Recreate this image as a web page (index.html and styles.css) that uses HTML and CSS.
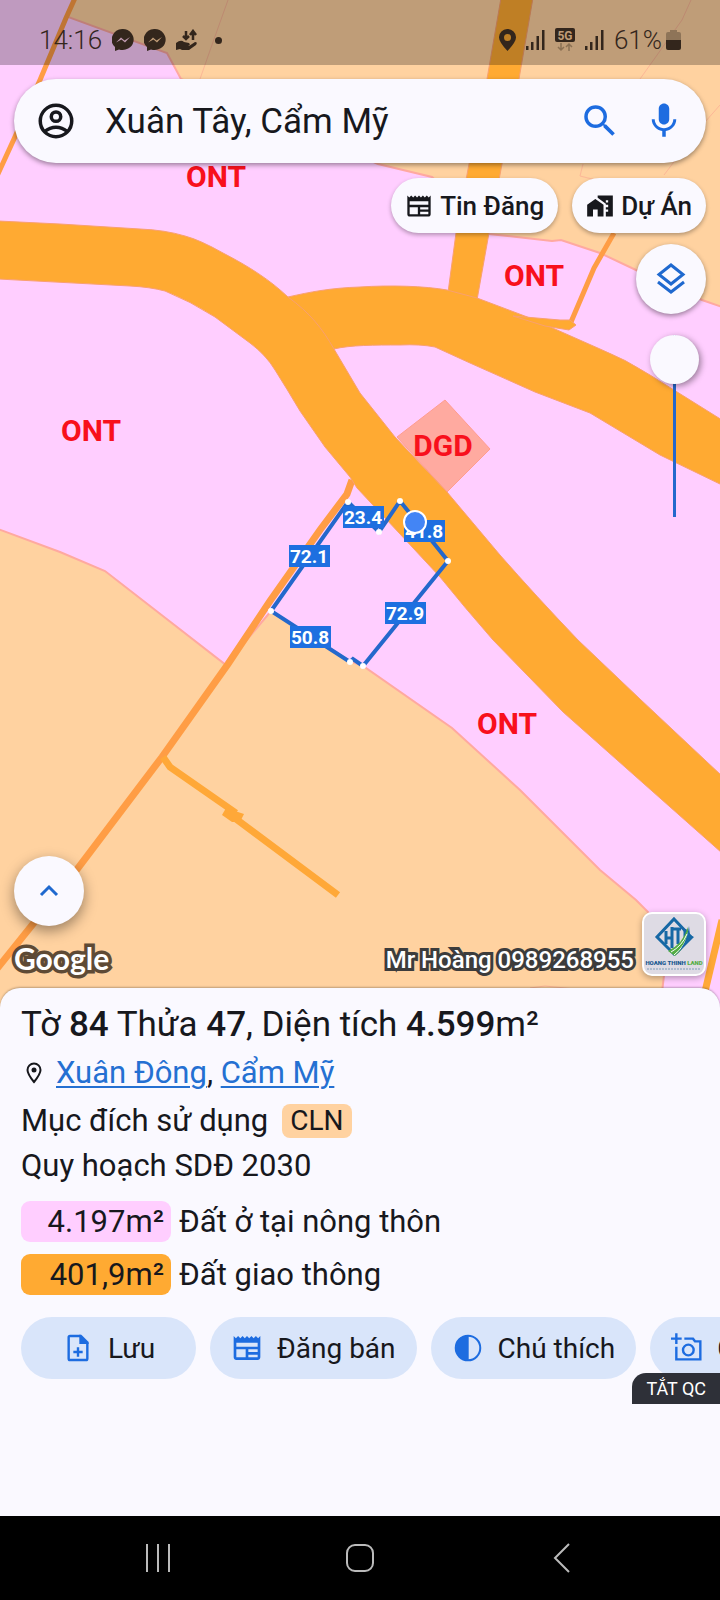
FILE: index.html
```html
<!DOCTYPE html>
<html lang="vi">
<head>
  <meta charset="UTF-8">
  <meta name="viewport" content="width=device-width, initial-scale=1.0">
  <title>Xuân Tây, Cẩm Mỹ</title>
  <link rel="stylesheet" href="styles.css">
</head>
<body>
  <main class="map">
    <svg class="map-canvas" viewBox="0 0 720 1008" preserveAspectRatio="xMidYMin slice">
      <rect class="ont" width="720" height="1008"/>

      <!-- Farm land -->
      <path class="farm" d="M74 -2L68 17L167 53L181 79L378 164L432 177L489 234L552 241L561 240L600 253L636 270L702 300L722 307V-2z"/>
      <path class="farm" d="M-2 529L60 552L105 571L226 665L271 611L350 661L363 666L452 728L520 790L600 870L636 900L648 912L664 975L660 1010H-2z"/>
      <path class="border" d="M228 0L213 42L200 79M691 0L682 20L640 79M720 105L698 130L664 175M583 164L580 176L600 181M530 988L545 986L575 989"/>

      <!-- Roads -->
      <path class="road" d="M501 -2H533L519 79L502 164L489 233L477 300H447L456 233L469 164L487 79z"/>
      <path class="road" d="M288 297C310 292 330 288 360 287C390 285 425 286 447 290L477 298L530 318L600 349Q625 359 650 375L722 420V485L660 455L590 413L535 392L470 363L435 347Q420 344 400 345C375 345 350 345 334 349z"/>
      <path class="lane" d="M75 -2L66 18L40 80L14 139L-3 176"/>
      <path class="lane" d="M614 233L594 268L571 322"/>
      <path class="road" d="M513 316L560 320L570 320L576 325L569 330L545 326z"/>
      <path class="lane-wide" d="M352 480L347 494L320 530L270 601L228 664L162 757L78 868L-4 970L-4 990"/>
      <path class="side-road" d="M163 757L170 767L236 813M232 816L338 895"/>
      <path class="side-road-joint" d="M226 808L244 814L240 822L232 822L222 815z"/>
      <path class="side-road" d="M722 920L703 1000"/>
      <path class="school" d="M445 400L490 449L447 492L397 437z"/>
      <path class="road" d="M-2 221L60 224L140 229Q165 230 185 236Q200 240 223 253C250 267 270 280 288 297C310 313 322 328 334 349L360 393L395 437L447 492L500 555Q535 595 578 640L640 699L722 776V853L643 783L563 712L493 640Q465 608 440 577L400 534L357 488L350 477L325 447L300 411Q287 389 275 370Q266 355 250 343L215 317Q190 301 165 291Q150 287 130 286L-2 279z"/>

      <!-- Land use codes -->
      <text class="code" x="216" y="187">ONT</text>
      <text class="code" x="534" y="286">ONT</text>
      <text class="code" x="91" y="441">ONT</text>
      <text class="code" x="443" y="456">DGD</text>
      <text class="code" x="507" y="734">ONT</text>

      <!-- Selected parcel -->
      <path class="parcel" d="M348 502L379 532L400 501L448 561L363 666L353 659L350 662L271 611z"/>
      <g class="vertex">
        <circle cx="348" cy="502" r="3"/>
        <circle cx="379" cy="532" r="3"/>
        <circle cx="400" cy="501" r="3"/>
        <circle cx="448" cy="561" r="3"/>
        <circle cx="363" cy="666" r="3"/>
        <circle cx="350" cy="662" r="3"/>
        <circle cx="271" cy="611" r="3"/>
      </g>
      <g class="edge">
        <rect x="343" y="506" width="41" height="22"/><text x="363" y="524">23.4</text>
        <rect x="404" y="520" width="41" height="22"/><text x="424" y="538">41.8</text>
        <rect x="289" y="545" width="41" height="22"/><text x="309" y="563">72.1</text>
        <rect x="385" y="602" width="41" height="22"/><text x="405" y="620">72.9</text>
        <rect x="290" y="626" width="41" height="22"/><text x="310" y="644">50.8</text>
      </g>
      <circle class="here" cx="415" cy="522" r="11"/>
    </svg>

    <header class="status">
      <span class="status-text">14:16</span>
      <svg width="22" height="22" viewBox="0 0 22 22"><path d="M11 0a11 10.5 0 1 1-4 20.400L3 22V18A11 10.500 0 0 1 11 0z"/><path d="M4 13.500L9 8.500L12.500 11.500L18 8L13 13.500L9.500 10.500z" fill="#c09bb0"/></svg>
      <svg width="22" height="22" viewBox="0 0 22 22"><path d="M11 0a11 10.5 0 1 1-4 20.400L3 22V18A11 10.500 0 0 1 11 0z"/><path d="M4 13.500L9 8.500L12.500 11.500L18 8L13 13.500L9.500 10.500z" fill="#c09c77"/></svg>
      <svg width="22" height="22" viewBox="0 0 22 22"><path d="M0 14Q5 10 8 13L13 14Q15 16 12 17H8H13L19 13Q22 13 20 16L13 21H6L4 20L0 21z"/><path d="M10 2V10M7 7L10 10L13 7M17 11V3M14 6L17 2L20 6" fill="none" stroke="currentColor" stroke-width="2.500"/></svg>
      <span class="status-dot"></span>
      <span class="status-space"></span>
      <svg width="17" height="22" viewBox="0 0 17 22"><path fill-rule="evenodd" d="M8.500 0A8.300 8.300 0 0 1 17 8.500Q17 13 8.500 22Q0 13 0 8.500A8.300 8.300 0 0 1 8.500 0zM8.500 5a3.500 3.500 0 1 0 0 7a3.500 3.500 0 0 0 0-7z"/></svg>
      <svg width="19" height="20" viewBox="0 0 19 20"><path d="M0 16h2.500v4H0zM5 12h2.500v8H5zM10.500 6h2.500v14h-2.500zM16 0h2.500v20H16z"/></svg>
      <svg class="net" width="20" height="24" viewBox="0 0 20 24"><rect width="20" height="14" rx="2"/><text x="10" y="12">5G</text><path d="M6 15v7M3 19l3 3l3-3M14 23v-7M11 19l3-3l3 3" fill="none" stroke="#8b7154" stroke-width="1.500"/></svg>
      <svg width="19" height="20" viewBox="0 0 19 20"><path d="M0 16h2.500v4H0zM5 12h2.500v8H5zM10.500 6h2.500v14h-2.500zM16 0h2.500v20H16z"/></svg>
      <span class="status-text">61%</span>
      <svg class="battery" width="15" height="20" viewBox="0 0 15 20"><path d="M4 0h7v2h2q2 0 2 2v6H0V4q0-2 2-2h2z" fill="#8e7458"/><path d="M0 10h15v8q0 2-2 2H2q-2 0-2-2z"/></svg>
    </header>

    <form class="search" role="search">
      <button class="icon-button" type="button" aria-label="Tài khoản">
        <svg class="icon dark" viewBox="0 0 24 24"><g fill="none" stroke="currentColor" stroke-width="2"><circle cx="12" cy="12" r="9"/><circle cx="12" cy="9.500" r="2.700"/><path d="M5.500 18Q8.500 15.500 12 15.500T18.500 18"/></g></svg>
      </button>
      <input type="text" value="Xuân Tây, Cẩm Mỹ" aria-label="Tìm kiếm">
      <button class="icon-button" type="submit" aria-label="Tìm">
        <svg class="icon" viewBox="0 0 24 24"><path d="M15.500 14h-.79l-.28-.27A6.470 6.470 0 0 0 16 9.500 6.500 6.500 0 1 0 9.500 16c1.610 0 3.090-.59 4.230-1.570l.27.28v.79l5 4.990L20.490 19l-4.990-5zm-6 0C7.010 14 5 11.990 5 9.500S7.010 5 9.500 5 14 7.010 14 9.500 11.990 14 9.500 14z"/></svg>
      </button>
      <button class="icon-button" type="button" aria-label="Giọng nói">
        <svg class="icon" viewBox="0 0 24 24"><path d="M12 14c1.660 0 2.990-1.340 2.990-3L15 5c0-1.660-1.340-3-3-3S9 3.340 9 5v6c0 1.660 1.340 3 3 3zm5.300-3c0 3-2.540 5.100-5.300 5.100S6.700 14 6.700 11H5c0 3.410 2.720 6.230 6 6.720V21h2v-3.280c3.280-.48 6-3.300 6-6.720h-1.700z"/></svg>
      </button>
    </form>

    <div class="chips">
      <button class="chip" type="button">
        <svg viewBox="0 0 24 24"><path d="M22 3l-1.670 1.670L18.670 3 17 4.670 15.330 3l-1.660 1.670L12 3l-1.670 1.670L8.670 3 7 4.670 5.330 3 3.670 4.670 2 3v16c0 1.100.9 2 2 2h16c1.100 0 2-.9 2-2V3zM11 19H4v-6h7v6zm9 0h-7v-2h7v2zm0-4h-7v-2h7v2zm0-4H4V8h16v3z"/></svg>
        Tin Đăng
      </button>
      <button class="chip" type="button">
        <svg viewBox="0 0 24 24"><path d="M1 11v10h5v-6h4v6h5V11L8 6z"/><path d="M10 3v1.970l7 5V11h2v2h-2v2h2v2h-2v4h6V3H10zm9 6h-2V7h2v2z"/></svg>
        Dự Án
      </button>
    </div>

    <div class="side">
      <button class="round" type="button" aria-label="Lớp bản đồ">
        <svg width="30" height="32" viewBox="0 0 30 32"><path d="M15 2L27 11.500L15 21L3 11.500zM2 19L15 29L28 19" fill="none" stroke="currentColor" stroke-width="3"/></svg>
      </button>
      <input class="opacity" type="range" min="0" max="100" value="0" aria-label="Độ mờ">
    </div>

    <div class="map-bottom">
      <div class="map-left">
        <button class="round raised" type="button" aria-label="Mở rộng">
          <svg width="20" height="14" viewBox="0 0 20 14"><path d="M2 11L10 3L18 11" fill="none" stroke="currentColor" stroke-width="3"/></svg>
        </button>
        <span class="google">Google</span>
      </div>
      <div class="agent">
        <span class="agent-name">Mr Hoàng 0989268955</span>
        <svg class="agent-logo" viewBox="0 0 60 60">
          <path d="M30 5L47 23L30 40L13 23z" fill="none" stroke="#1768a5" stroke-width="3"/>
          <path d="M22 17V30M28 13V34M22 24H28M28 15H37M34 15V30M41 15V27" fill="none" stroke="#1768a5" stroke-width="3"/>
          <path d="M24 37Q39 30 44 13Q45 31 31 42z" fill="#54ad43"/>
          <path d="M27 38Q38 32 43 20M30 41Q42 32 45 16" fill="none" stroke="#fff" stroke-width="1"/>
          <path d="M45 12L46 21L50 23L31 42Q43 30 45 12z" fill="#1768a5"/>
          <text x="30" y="51" fill="#17578f">HOANG THINH <tspan fill="#54ad43">LAND</tspan></text>
          <path d="M3 55H57" stroke="#7f9db8" stroke-width="1" stroke-dasharray="2 1"/>
        </svg>
      </div>
    </div>
  </main>

  <section class="sheet">
    <h1>Tờ <b>84</b> Thửa <b>47</b>, Diện tích <b>4.599</b>m²</h1>
    <p class="place">
      <svg width="16" height="22" viewBox="0 0 16 22"><path d="M8 1.500A6.500 6.500 0 0 1 14.500 8Q14.500 12 8 20Q1.500 12 1.500 8A6.500 6.500 0 0 1 8 1.500z" fill="none" stroke="currentColor" stroke-width="2"/><circle cx="8" cy="8" r="2.500"/></svg>
      <span><a href="#">Xuân Đông</a>, <a href="#">Cẩm Mỹ</a></span>
    </p>
    <p class="purpose">Mục đích sử dụng <span class="tag">CLN</span></p>
    <p class="plan">Quy hoạch SDĐ 2030</p>

    <ul class="legend">
      <li><span class="area rural">4.197m²</span>Đất ở tại nông thôn</li>
      <li><span class="area traffic">401,9m²</span>Đất giao thông</li>
    </ul>

    <div class="actions">
      <button type="button">
        <svg viewBox="0 0 24 24"><path d="M14 3H6Q5 3 5 4V20Q5 21 6 21H18Q19 21 19 20V8M12 11.500V18.500M8.500 15H15.500" fill="none" stroke="currentColor" stroke-width="1.800"/><path d="M13 2H14.500L20 7.500V9H13z"/></svg>
        Lưu
      </button>
      <button type="button">
        <svg viewBox="0 0 24 24"><path d="M22 3l-1.670 1.670L18.670 3 17 4.670 15.330 3l-1.660 1.670L12 3l-1.670 1.670L8.670 3 7 4.670 5.330 3 3.670 4.670 2 3v16c0 1.100.9 2 2 2h16c1.100 0 2-.9 2-2V3zM11 19H4v-6h7v6zm9 0h-7v-2h7v2zm0-4h-7v-2h7v2zm0-4H4V8h16v3z"/></svg>
        Đăng bán
      </button>
      <button type="button">
        <svg viewBox="0 0 24 24"><circle cx="12" cy="12" r="9.200" fill="none" stroke="currentColor" stroke-width="1.500"/><path d="M12.500 2.500A9.500 9.500 0 0 0 12.500 21.500z"/></svg>
        Chú thích
      </button>
      <button type="button">
        <svg viewBox="0 0 24 24"><g fill="none" stroke="currentColor" stroke-width="1.800"><path d="M4 1V9M0 5H8M4 11V20.500H22V7H18L16.500 5H10"/><circle cx="13" cy="13.500" r="4"/></g></svg>
        Chụp ảnh
      </button>
    </div>
    <button class="hide-ads" type="button">TẮT QC</button>
  </section>

  <nav class="system-nav">
    <button type="button" aria-label="Gần đây"><svg width="30" height="30" viewBox="0 0 30 30"><path d="M4 1V29M15 1V29M26 1V29"/></svg></button>
    <button type="button" aria-label="Trang chủ"><svg width="30" height="30" viewBox="0 0 30 30"><rect x="2" y="2" width="26" height="26" rx="8"/></svg></button>
    <button type="button" aria-label="Quay lại"><svg width="30" height="30" viewBox="0 0 30 30"><path d="M22 1L8 15L22 29"/></svg></button>
  </nav>
</body>
</html>
```
FILE: styles.css
```css
* {
  box-sizing: border-box;
}
body {
  margin: 0;
  min-height: 100vh;
  display: flex;
  flex-direction: column;
  background-color: #faf9ff;
  color: #17181d;
  font-family: Roboto, sans-serif;
}
button,
input {
  font-family: inherit;
  color: inherit;
}
button {
  border: none;
  padding: 0;
  cursor: pointer;
}
svg {
  fill: currentColor;
  flex: none;
}

/* Map */
.map {
  position: relative;
  flex: 1;
  display: flex;
  flex-direction: column;
  overflow: hidden;
}
.map-canvas {
  position: absolute;
  inset: 0;
  width: 100%;
  height: 100%;
}
.ont {
  fill: #ffceff;
}
.farm {
  fill: #ffd2a0;
  stroke: #ffa9a0;
  stroke-width: 2;
}
.border {
  fill: none;
  stroke: #fcb797;
  stroke-width: 1;
}
.road {
  fill: #ffaa32;
  stroke: #f9a070;
  stroke-width: 1;
}
.lane,
.lane-wide,
.side-road {
  fill: none;
  stroke: #ff9d45;
  stroke-width: 5;
}
.lane-wide {
  stroke-width: 7;
}
.side-road {
  stroke: #ffa838;
  stroke-width: 7;
}
.side-road-joint {
  fill: #ffa838;
}
.school {
  fill: #ffaaa0;
  stroke: #ff9d90;
}
.code {
  fill: #f8101c;
  font-size: 30px;
  font-weight: 700;
  text-anchor: middle;
}
.parcel {
  fill: none;
  stroke: #2468cc;
  stroke-width: 4;
}
.vertex {
  fill: #fff;
}
.edge rect {
  fill: #1e6fe0;
}
.edge text {
  fill: #fff;
  font-size: 19px;
  font-weight: 700;
  text-anchor: middle;
}
.here {
  fill: #4385f5;
  stroke: #fff;
  stroke-width: 2;
}

/* Status bar */
.status {
  position: relative;
  display: flex;
  align-items: center;
  gap: 10px;
  height: 65px;
  padding: 15px 39px 0;
  background-color: rgba(0, 0, 0, 0.25);
  color: #33261c;
}
.status-text {
  font-size: 26px;
  font-weight: 300;
}
.status-dot {
  width: 7px;
  height: 7px;
  margin-left: 7px;
  border-radius: 50%;
  background-color: currentColor;
}
.status-space {
  flex: 1;
}
.net text {
  fill: #c09c77;
  font-size: 12px;
  font-weight: 700;
  text-anchor: middle;
}
.battery {
  margin-left: -6px;
}

/* Search */
.search {
  position: relative;
  display: flex;
  align-items: center;
  gap: 22px;
  height: 84px;
  margin: 14px 14px 0;
  padding: 0 21px;
  border-radius: 42px;
  background-color: #faf9ff;
  box-shadow: 0 2px 5px rgba(0, 0, 0, 0.4);
}
.search input {
  flex: 1;
  min-width: 0;
  height: 60px;
  padding: 0 0 0 6px;
  border: none;
  outline: none;
  background: none;
  font-size: 35px;
}
.icon-button {
  display: flex;
  background: none;
}
.icon {
  width: 42px;
  height: 42px;
  color: #1d6ce0;
}
.icon.dark {
  color: #17181d;
}
.chips {
  position: relative;
  display: flex;
  justify-content: flex-end;
  gap: 14px;
  margin: 15px 14px 0;
}
.chip {
  display: flex;
  align-items: center;
  gap: 7px;
  height: 55px;
  padding: 0 14px;
  border-radius: 28px;
  background-color: #faf9ff;
  box-shadow: 0 2px 4px rgba(0, 0, 0, 0.3);
  font-size: 26px;
  font-weight: 500;
}
.chip svg {
  width: 28px;
  height: 28px;
}
.side {
  position: relative;
  display: flex;
  flex-direction: column;
  align-items: flex-end;
  gap: 21px;
  margin: 11px 14px 0;
}
.round {
  display: flex;
  align-items: center;
  justify-content: center;
  width: 70px;
  height: 70px;
  border-radius: 50%;
  background-color: #faf9ff;
  color: #1f69cf;
  box-shadow: 0 2px 5px rgba(0, 0, 0, 0.4);
}
.raised {
  box-shadow: 0 5px 14px rgba(0, 0, 0, 0.4);
}
.opacity {
  appearance: none;
  writing-mode: vertical-lr;
  width: 49px;
  height: 182px;
  margin: 0 7px 0 0;
  background: linear-gradient(#2468cc, #2468cc) center / 3px 100% no-repeat;
}
.opacity::-webkit-slider-thumb {
  appearance: none;
  width: 49px;
  height: 49px;
  border-radius: 50%;
  background-color: #faf9ff;
  box-shadow: 2px 2px 6px rgba(0, 0, 0, 0.4);
}
.map-bottom {
  position: relative;
  display: flex;
  justify-content: space-between;
  align-items: flex-end;
  margin-top: auto;
  padding: 0 14px 32px;
}
.map-left {
  display: flex;
  flex-direction: column;
  gap: 14px;
}
.google,
.agent-name {
  color: #fff;
  paint-order: stroke fill;
}
.google {
  font: bold 30px/36px Lato, sans-serif;
  -webkit-text-stroke: 7px #5e4a35;
}
.agent {
  display: flex;
  align-items: center;
  gap: 8px;
}
.agent-name {
  margin-top: 32px;
  font-size: 24px;
  line-height: 32px;
  font-weight: 500;
  -webkit-text-stroke: 6px #3c3c3c;
}
.agent-logo {
  width: 64px;
  height: 64px;
  border: 2px solid #fff;
  border-radius: 10px;
  background-color: #dedbe4;
  box-shadow: 0 2px 6px rgba(0, 0, 0, 0.3);
}
.agent-logo text {
  font-size: 6px;
  font-weight: 900;
  text-anchor: middle;
}

/* Details sheet */
.sheet {
  position: relative;
  display: flex;
  flex-direction: column;
  margin-top: -20px;
  padding: 13px 0 112px;
  border-radius: 20px 20px 0 0;
  background-color: #faf9ff;
  box-shadow: 0 -1px 2px rgba(0, 0, 0, 0.25);
}
.sheet h1,
.sheet p {
  margin: 0;
  padding: 0 21px;
  font-size: 31px;
  font-weight: 400;
  line-height: 48px;
}
.sheet h1 {
  font-size: 35px;
}
.sheet b {
  font-weight: 500;
}
.place {
  display: flex;
  align-items: center;
  gap: 14px;
}
.place svg {
  margin-left: 5px;
}
.sheet a {
  color: #2470d2;
  text-decoration-thickness: 2px;
  text-underline-offset: 3px;
}
.purpose {
  display: flex;
  align-items: center;
  gap: 14px;
}
.tag {
  padding: 0 8px;
  border-radius: 8px;
  background-color: #ffd2a0;
  font-size: 28px;
  line-height: 34px;
}
.sheet .plan {
  line-height: 42px;
}
.legend {
  display: flex;
  flex-direction: column;
  gap: 12px;
  margin: 14px 21px 0;
  padding: 0;
  list-style: none;
  font-size: 31px;
  line-height: 41px;
}
.legend li {
  display: flex;
  gap: 8px;
}
.area {
  width: 150px;
  padding-right: 7px;
  border-radius: 9px;
  text-align: right;
}
.rural {
  background-color: #ffceff;
}
.traffic {
  background-color: #ffaa32;
}
.actions {
  display: flex;
  gap: 14px;
  margin-top: 22px;
  padding-left: 21px;
  overflow-x: auto;
  scrollbar-width: none;
}
.actions button {
  display: flex;
  flex: none;
  align-items: center;
  justify-content: center;
  gap: 14px;
  min-width: 175px;
  height: 62px;
  padding: 0 21px;
  border-radius: 31px;
  background-color: #d9e5fa;
  font-size: 28px;
}
.actions svg {
  width: 32px;
  height: 32px;
  color: #1d6ce0;
}
.hide-ads {
  position: relative;
  align-self: flex-end;
  height: 31px;
  margin-top: -6px;
  padding: 0 14px;
  border-radius: 14px 0 0 0;
  background-color: #2e3038;
  color: #fff;
  font-size: 18px;
}

/* System navigation */
.system-nav {
  display: flex;
  justify-content: center;
  height: 84px;
  background-color: #000;
  color: #bbb;
}
.system-nav button {
  display: flex;
  align-items: center;
  justify-content: center;
  flex: 0 1 28%;
  background: none;
}
.system-nav svg {
  fill: none;
  stroke: currentColor;
  stroke-width: 2;
}
```
